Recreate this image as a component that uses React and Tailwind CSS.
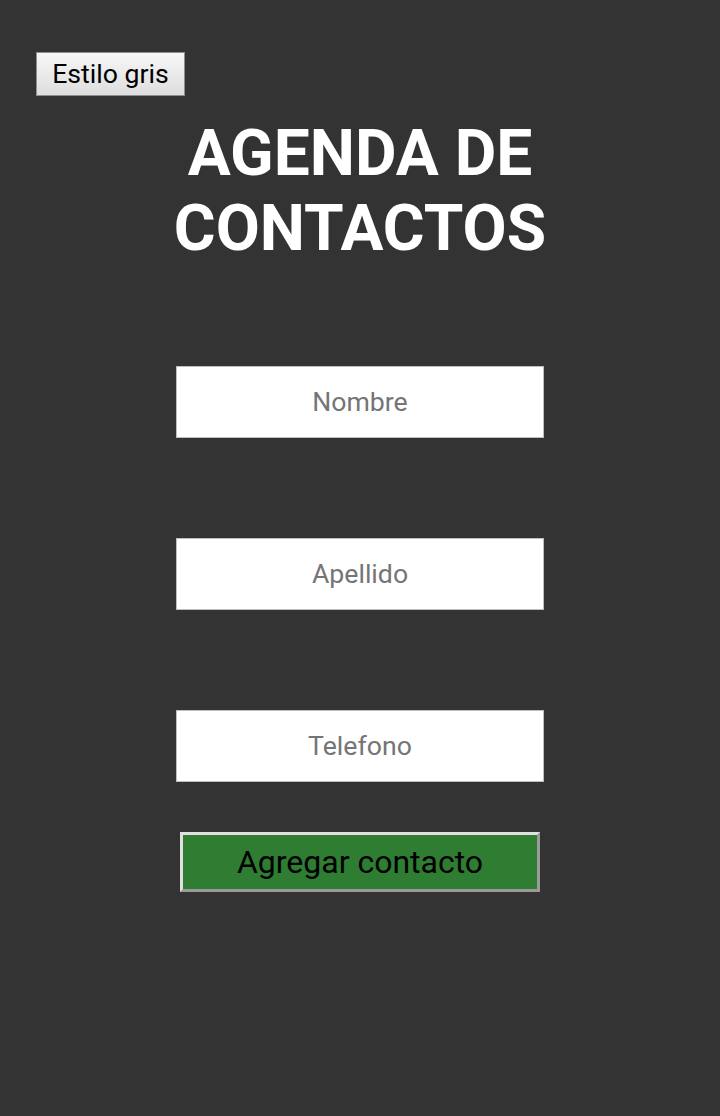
export default function App() {
  return (
    <div
      className="min-h-[1116px] w-full bg-[#333333] pt-[52px]"
      style={{ fontFamily: "Roboto, 'Noto Sans', sans-serif" }}
    >
      <div className="pl-[36px]">
        <button className="h-[44px] w-[149px] border border-[#8f8f8f] bg-gradient-to-b from-[#f7f7f7] to-[#dedede] text-[26.67px] leading-none text-black">
          Estilo gris
        </button>
      </div>
      <h1 className="mx-auto mt-[20px] w-[400px] text-center text-[64px] font-bold leading-[75px] text-white">
        AGENDA DE CONTACTOS
      </h1>
      <div className="mt-[100px] flex flex-col items-center">
        <input
          placeholder="Nombre"
          className="h-[72px] w-[368px] border border-[#bdbdbd] bg-white text-center text-[26.67px] text-black outline-none placeholder:text-[#757575]"
        />
        <input
          placeholder="Apellido"
          className="mt-[100px] h-[72px] w-[368px] border border-[#bdbdbd] bg-white text-center text-[26.67px] text-black outline-none placeholder:text-[#757575]"
        />
        <input
          placeholder="Telefono"
          className="mt-[100px] h-[72px] w-[368px] border border-[#bdbdbd] bg-white text-center text-[26.67px] text-black outline-none placeholder:text-[#757575]"
        />
        <button className="mt-[50px] h-[60px] w-[360px] border-[3px] border-t-[#e0e0e0] border-l-[#e0e0e0] border-b-[#9a9a9a] border-r-[#9a9a9a] bg-[#2e7d32] text-[32px] leading-none text-black">
          Agregar contacto
        </button>
      </div>
    </div>
  );
}
